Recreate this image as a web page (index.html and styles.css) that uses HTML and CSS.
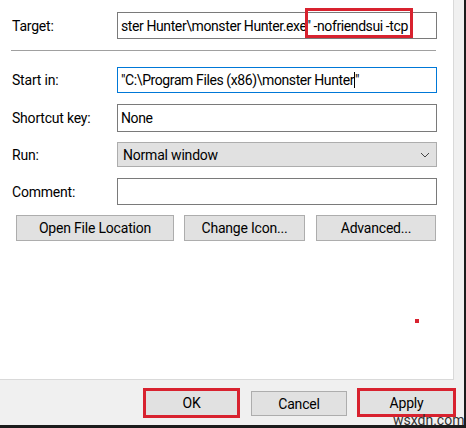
FILE: index.html
```html
<!DOCTYPE html>
<html lang="en">
<head>
    <meta charset="UTF-8">
    <title>Properties - Shortcut</title>
    <link rel="stylesheet" href="styles.css">
</head>
<body>
    <div class="window">
        <div class="panel">
            <div class="field">
                <span class="label">Target:</span>
                <div class="input">ster Hunter\monster Hunter.exe" -nofriendsui -tcp</div>
            </div>
            <div class="divider"></div>
            <div class="field row-start">
                <span class="label">Start in:</span>
                <div class="input input-focus">"C:\Program Files (x86)\monster Hunter<span class="caret"></span>"</div>
            </div>
            <div class="field row-key">
                <span class="label">Shortcut key:</span>
                <div class="input">None</div>
            </div>
            <div class="field row-run">
                <span class="label">Run:</span>
                <div class="input select">
                    Normal window
                    <svg class="chevron" width="10" height="6" viewBox="0 0 10 6">
                        <path d="M1 1 L5 5 L9 1" fill="none" stroke="#444" stroke-width="1"/>
                    </svg>
                </div>
            </div>
            <div class="field row-comment">
                <span class="label">Comment:</span>
                <div class="input"></div>
            </div>
            <div class="actions">
                <button class="btn btn-open">Open File Location</button>
                <button class="btn btn-icon">Change Icon...</button>
                <button class="btn btn-adv">Advanced...</button>
            </div>
            <span class="dot"></span>
        </div>
        <div class="footer">
            <button class="btn btn-ok marked">OK</button>
            <button class="btn btn-cancel">Cancel</button>
            <button class="btn btn-apply marked">Apply</button>
        </div>
        <!-- annotation boxes -->
        <span class="mark-args"></span>
        <span class="watermark">wsxdn.com</span>
    </div>
</body>
</html>
```

FILE: styles.css
```css
body {
    margin: 0;
    font-family: Roboto, "Liberation Sans", sans-serif;
    font-size: 14px;
    color: #000;
}
.window {
    width: 466px;
    height: 428px;
    box-sizing: border-box;
    background-color: #f0f0f0;
    border-right: 2px solid #1b1b1b;
    border-bottom: 3px solid #1b1b1b;
    position: relative;
    overflow: hidden;
}
.panel {
    width: 454px;
    height: 380px;
    box-sizing: border-box;
    background-color: #fff;
    border-right: 1px solid #d9d9d9;
    border-bottom: 1px solid #d9d9d9;
    padding-top: 12px;
    position: relative;
}
.field {
    display: flex;
    align-items: center;
    height: 27px;
}
.label {
    width: 117px;
    padding-left: 12px;
    box-sizing: border-box;
    letter-spacing: -0.2px;
}
.input {
    width: 320px;
    height: 100%;
    box-sizing: border-box;
    border: 1px solid #7a7a7a;
    padding-left: 3px;
    display: flex;
    align-items: center;
    white-space: nowrap;
    overflow: hidden;
    letter-spacing: -0.4px;
}
.input-focus {
    border-color: #0078d7;
}
.caret {
    display: inline-block;
    width: 1px;
    height: 16px;
    background-color: #000;
}
.select {
    background-color: #e1e1e1;
    border-color: #adadad;
    padding-left: 5px;
    justify-content: space-between;
    padding-right: 6px;
    letter-spacing: -0.2px;
}
.divider {
    margin: 11px 0 0 11px;
    width: 425px;
    border-top: 1px solid #a0a0a0;
}
.row-start { margin-top: 16px; height: 26px; }
.row-key { margin-top: 11px; height: 28px; }
.row-run { margin-top: 10px; height: 25px; }
.row-comment { margin-top: 11px; height: 27px; }

/* Buttons */
.btn {
    font-family: Roboto, "Liberation Sans", sans-serif;
    font-size: 14px;
    letter-spacing: -0.2px;
    color: #000;
    background-color: #e1e1e1;
    border: 1px solid #adadad;
    padding: 0;
    box-sizing: border-box;
}
.actions {
    display: flex;
    margin: 10px 0 0 16px;
    height: 26px;
}
.btn-open { width: 158px; }
.btn-icon { width: 121px; margin-left: 10px; }
.btn-adv { width: 120px; margin-left: 11px; }

.footer {
    display: flex;
    align-items: flex-start;
    padding-left: 143px;
}
.btn-ok { width: 97px; height: 30px; margin-top: 8px; }
.btn-cancel { width: 96px; height: 25px; margin: 11px 0 0 11px; }
.btn-apply { width: 99px; height: 29px; margin: 8px 0 0 10px; }
.marked {
    border: 3px solid #d8222f;
}

/* Annotations */
.mark-args {
    position: absolute;
    left: 305px;
    top: 8px;
    width: 108px;
    height: 30px;
    box-sizing: border-box;
    border: 3px solid #d8222f;
}
.dot {
    position: absolute;
    left: 415px;
    top: 319px;
    width: 4px;
    height: 4px;
    background-color: #d8222f;
}
.watermark {
    position: absolute;
    left: 393px;
    top: 412px;
    font-size: 14px;
    color: #333;
}
```
